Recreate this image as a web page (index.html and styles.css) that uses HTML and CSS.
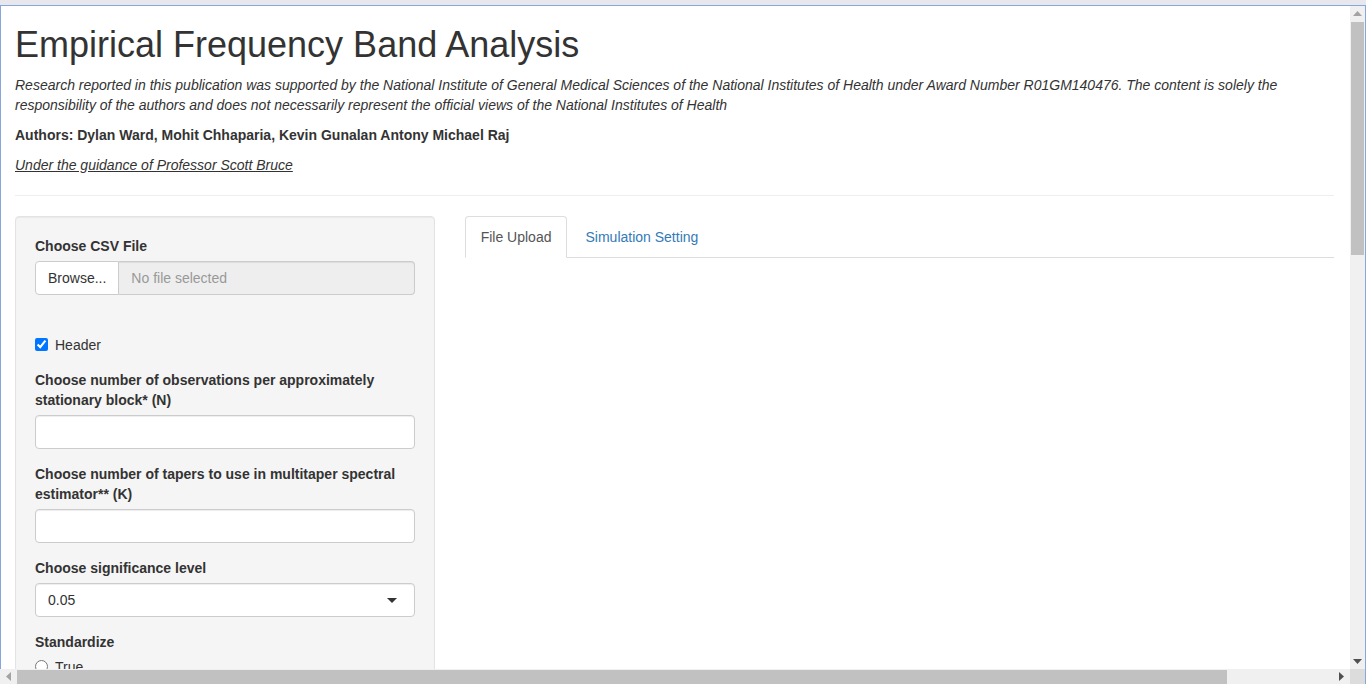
FILE: index.html
```html
<!DOCTYPE html>
<html lang="en">
<head>
<meta charset="utf-8">
<title>Empirical Frequency Band Analysis</title>
<link rel="stylesheet" href="styles.css">
</head>
<body>
<div class="topstrip"></div>
<div class="window">
  <div class="viewport">
    <div class="container">
      <h1 class="title">Empirical Frequency Band Analysis</h1>
      <p class="note"><em>Research reported in this publication was supported by the National Institute of General Medical Sciences of the National Institutes of Health under Award Number R01GM140476. The content is solely the responsibility of the authors and does not necessarily represent the official views of the National Institutes of Health</em></p>
      <p class="authors"><strong>Authors: Dylan Ward, Mohit Chhaparia, Kevin Gunalan Antony Michael Raj</strong></p>
      <p class="guide"><u><em>Under the guidance of Professor Scott Bruce</em></u></p>
      <hr class="divider">
      <div class="row">
        <div class="sidebar">
          <form class="well">
            <div class="field file-field">
              <label class="field-label">Choose CSV File</label>
              <div class="file-group">
                <span class="browse">Browse...</span>
                <input class="file-name" type="text" placeholder="No file selected" readonly>
              </div>
            </div>
            <div class="check-row">
              <input type="checkbox" checked>
              <span>Header</span>
            </div>
            <div class="field">
              <label class="field-label">Choose number of observations per approximately stationary block* (N)</label>
              <input class="text-input" type="text">
            </div>
            <div class="field">
              <label class="field-label">Choose number of tapers to use in multitaper spectral estimator** (K)</label>
              <input class="text-input" type="text">
            </div>
            <div class="field">
              <label class="field-label">Choose significance level</label>
              <div class="select">
                <span>0.05</span>
                <span class="caret"></span>
              </div>
            </div>
            <div class="field">
              <label class="field-label">Standardize</label>
              <div class="radio-row">
                <input type="radio" name="std">
                <span>True</span>
              </div>
            </div>
          </form>
        </div>
        <div class="main">
          <ul class="tabs">
            <li class="tab active"><a>File Upload</a></li>
            <li class="tab"><a>Simulation Setting</a></li>
          </ul>
        </div>
      </div>
    </div>
  </div>
  <div class="vscroll">
    <div class="arrow-box">
      <svg width="9" height="5" viewBox="0 0 9 5"><polygon points="0,5 9,5 4.5,0" fill="#a3a3a3"/></svg>
    </div>
    <div class="vthumb"></div>
    <div class="vspacer"></div>
    <div class="arrow-box">
      <svg width="9" height="5" viewBox="0 0 9 5"><polygon points="0,0 9,0 4.5,5" fill="#505050"/></svg>
    </div>
  </div>
  <div class="hscroll">
    <div class="harrow">
      <svg width="5" height="9" viewBox="0 0 5 9"><polygon points="5,0 5,9 0,4.5" fill="#a3a3a3"/></svg>
    </div>
    <div class="hthumb"></div>
    <div class="hspacer"></div>
    <div class="harrow">
      <svg width="5" height="9" viewBox="0 0 5 9"><polygon points="0,0 0,9 5,4.5" fill="#505050"/></svg>
    </div>
  </div>
  <div class="corner"></div>
</div>
</body>
</html>
```

FILE: styles.css
```css
* { box-sizing: border-box; }

html, body {
  margin: 0;
  padding: 0;
  width: 1366px;
  height: 684px;
  overflow: hidden;
  background: #ffffff;
}

body {
  font-family: "Liberation Sans", Arial, sans-serif;
  font-size: 14px;
  line-height: 20px;
  color: #333333;
}

.topstrip {
  height: 5px;
  background: #e8e8ec;
}

.window {
  display: grid;
  grid-template-columns: 1350px 15px;
  grid-template-rows: 663px 15px;
  border-top: 1px solid #87a7dc;
  border-right: 1px solid #87a7dc;
  position: relative;
}

.viewport {
  position: relative;
  overflow: hidden;
  background: #ffffff;
}

.viewport::before {
  content: "";
  position: absolute;
  left: 0;
  top: 0;
  bottom: 0;
  width: 1px;
  background: #87a7dc;
  z-index: 2;
}

.container {
  padding: 0 16px 0 15px;
}

.title {
  margin: 19px 0 10px;
  font-size: 36px;
  font-weight: 500;
  line-height: 1.1;
  color: #333333;
}

.note, .authors, .guide {
  margin: 0 0 10px;
}

.divider {
  margin: 20px 0;
  border: 0;
  border-top: 1px solid #eeeeee;
  height: 0;
}

.row {
  display: grid;
  grid-template-columns: 1fr 2fr;
  margin: 0 -15px;
}

.sidebar, .main {
  padding: 0 15px;
}

.well {
  margin: 0;
  padding: 19px;
  background: #f5f5f5;
  border: 1px solid #e3e3e3;
  border-radius: 4px;
  box-shadow: inset 0 1px 1px rgba(0, 0, 0, 0.05);
  min-height: 520px;
}

.field {
  margin-bottom: 15px;
}

.field-label {
  display: block;
  font-weight: bold;
  margin-bottom: 5px;
}

.file-field {
  margin-bottom: 40px;
}

.file-group {
  display: flex;
  height: 34px;
}

.browse {
  display: flex;
  align-items: center;
  padding: 6px 12px;
  background: #ffffff;
  border: 1px solid #cccccc;
  border-radius: 4px 0 0 4px;
  color: #333333;
}

.file-name {
  flex: 1;
  min-width: 0;
  height: 34px;
  padding: 6px 12px;
  background: #eeeeee;
  border: 1px solid #cccccc;
  border-left: 0;
  border-radius: 0 4px 4px 0;
  font: inherit;
  color: #555555;
  box-shadow: inset 0 1px 1px rgba(0, 0, 0, 0.075);
  outline: none;
}

.file-name::placeholder {
  color: #999999;
}

.check-row, .radio-row {
  display: flex;
  align-items: center;
  height: 20px;
  margin-bottom: 15px;
}

.check-row input, .radio-row input {
  width: 13px;
  height: 13px;
  margin: 0 7px 0 0;
  accent-color: #0075ff;
}

.radio-row {
  margin-bottom: 10px;
}

.text-input {
  display: block;
  width: 100%;
  height: 34px;
  padding: 6px 12px;
  background: #ffffff;
  border: 1px solid #cccccc;
  border-radius: 4px;
  box-shadow: inset 0 1px 1px rgba(0, 0, 0, 0.075);
  font: inherit;
  outline: none;
}

.select {
  position: relative;
  display: flex;
  align-items: center;
  height: 34px;
  padding: 6px 12px;
  background: #ffffff;
  border: 1px solid #cccccc;
  border-radius: 4px;
  box-shadow: inset 0 1px 1px rgba(0, 0, 0, 0.075);
  color: #333333;
}

.caret {
  position: absolute;
  right: 17px;
  top: 14px;
  width: 0;
  height: 0;
  border-style: solid;
  border-width: 5px 5px 0 5px;
  border-color: #333333 transparent transparent transparent;
}

.tabs {
  display: flex;
  list-style: none;
  margin: 0;
  padding: 0;
  border-bottom: 1px solid #dddddd;
}

.tab {
  margin-bottom: -1px;
  margin-right: 2px;
}

.tab a {
  display: block;
  padding: 10px 15px;
  border: 1px solid transparent;
  border-radius: 4px 4px 0 0;
  color: #337ab7;
  line-height: 20px;
}

.tab.active a {
  color: #555555;
  background: #ffffff;
  border-color: #dddddd #dddddd transparent;
}

/* scrollbars */
.vscroll {
  display: flex;
  flex-direction: column;
  background: #f0f0f0;
}

.arrow-box {
  height: 15px;
  display: flex;
  align-items: center;
  justify-content: center;
}

.vthumb {
  margin: 1px 1px 0;
  height: 233px;
  background: #c1c1c1;
}

.vspacer {
  flex: 1;
}

.hscroll {
  display: flex;
  background: #f0f0f0;
}

.harrow {
  width: 17px;
  display: flex;
  align-items: center;
  justify-content: center;
}

.hthumb {
  margin-top: 1px;
  width: 1210px;
  background: #c1c1c1;
}

.hspacer {
  flex: 1;
}

.corner {
  background: #dcdcdc;
}
```
